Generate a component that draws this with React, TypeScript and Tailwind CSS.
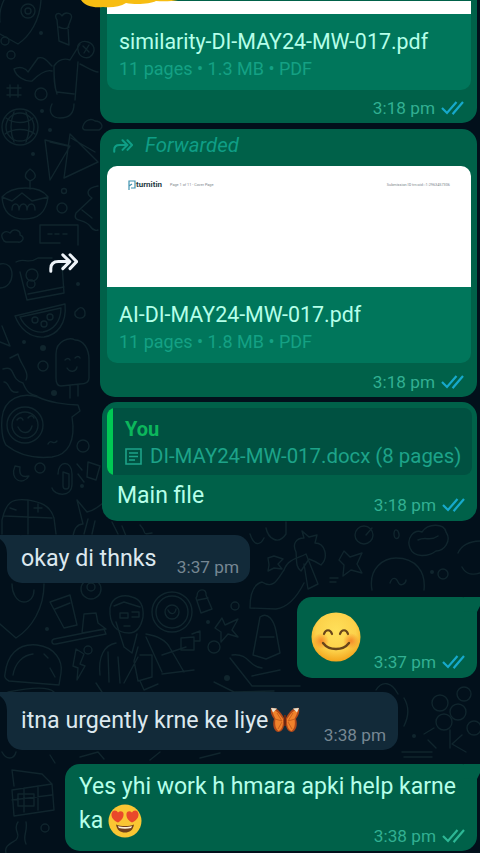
import { ReactNode } from 'react';

type Side = 'in' | 'out';

const Doodles = () => (
    <svg className="absolute inset-0 -z-10" width="480" height="853" viewBox="0 0 480 853" fill="none" stroke="#10252d" strokeWidth="1.4" strokeLinecap="round" strokeLinejoin="round">
        {/* rocket, dancer, ball */}
        <path d="M0 34l18 10c12-8 22-24 23-44M4 0c-3 6-5 14-4 22" />
        <circle cx="28" cy="11" r="7" /><circle cx="28" cy="11" r="3" />
        <circle cx="5" cy="41" r="4" /><circle cx="11" cy="55" r="4" />
        <path d="M57 20c-4-6 2-9 5-4 3-5 12-3 9 3l-3 8 1 18-10-4zM59 27c4 2 8 2 10 0" />
        <path d="M14 69c6-3 12-1 14 3l10-14c6-2 10 4 14 8M14 69c2 8 12 13 18 12 6-6 14-12 20-10M54 66c4-6 10-8 16-6l10-16M54 66c0 12 0 20 3 28M78 62l-3 38M57 92l17 2M52 104c-4 8 0 14 8 14 8 0 14-4 14-14M80 64c8 4 14 8 18 8" />
        <path d="M78 50c-2-6 4-10 10-8s8 8 4 13-13 3-14-5zM83 46l6 6M89 45l-5 8" />
        <path d="M10 85v12M18 85v12M7 88h14M7 95h14" /><circle cx="41" cy="94" r="6" />
        <path d="M83 126c2-6 8-8 12-5 6 0 10 6 4 9H86c-3 0-4-2-3-4z" />
        <circle cx="20" cy="127" r="18" /><circle cx="20" cy="127" r="14" />
        <path d="M6 118c8 6 20 6 27 0M5 134c8-6 22-6 30 0M14 112c-4 10-4 20 0 30M26 112c4 10 4 20 0 30" />
        {/* bunting, dumplings */}
        <path d="M45 140l5 40 20-34zM70 134l-6 44 34-16zM50 142l18 4M71 138l24 14" />
        <path d="M30 181c-8-4-4-9 0-12 6 4 8 9 0 12zM30 181v8M2 197c10-12 38-12 46 0-2 16-10 22-24 22S3 212 2 197zM2 197l10 4 10-8 10 8 16-4M12 210c0-8 7-8 7 0 1-8 8-8 8 0 1-8 8-8 8 0" />
        <circle cx="62" cy="208" r="5" /><circle cx="64" cy="191" r="2.5" />
        <path d="M98 186c-12 2-12 8-6 12l-16 15c-4 10 8 5 14 13 4 6 8 4 8 4M82 210l10 8" />
        <path d="M4 241c-6-8 2-11 6-8 4-6 11-2 10 2 6 2 2 8-2 7H6z" />
        <path d="M40 225h38v20M40 225v18h20M48 234h4M55 234h4M63 234h4" />
        {/* camera bag, melon, ice lolly */}
        <path d="M16 262c8-5 12 3 22-4h14M20 272l7 28 37-7-2-28M28 294l36-7" />
        <circle cx="32" cy="275" r="6" /><circle cx="31" cy="284" r="4" /><path d="M0 264c16-4 16 24 0 24" />
        <path d="M15 316l50-12c2 20-8 31-21 33-14 1-24-8-29-21zM20 317l41-9c0 14-8 22-18 24-10 1-19-6-23-15z" />
        <circle cx="35" cy="320" r="3" /><circle cx="44" cy="324" r="3" /><circle cx="50" cy="317" r="3" />
        <path d="M77 310c4-5 8-1 8 3 1 7-12 7-10-1z" />
        <path d="M56 354c0-14 14-17 19-14 8 0 14 8 14 20v18c0 4-4 6-9 6l-19 2c-4 0-5-3-5-8zM70 386v12M78 385v11M65 360c2-2 4-2 5 0M75 358c2-2 4-2 5 0M67 368c3 5 9 4 10-1" />
        <path d="M2 326l8 20-10-4M3 369c14-4 6 10 20 14 4 10 8 12 14 13M10 358l8-4c2 10 12 18 8 26M4 382c6 0 4 12 14 10" />
        <circle cx="43" cy="366" r="5" />
        {/* whistle */}
        <path d="M2 418c2-20 20-26 36-21 10 5 28 8 40 8l2 6-8 6c4 24-4 38-20 40-20 2-36-4-46-12-4-6-5-18-4-27zM48 444c3-6 5 2 9-3" />
        <circle cx="25" cy="425" r="18" /><circle cx="25" cy="425" r="13" /><path d="M17 420c2-3 5-3 6 0M28 418c2-3 5-3 6 0M18 427c4 8 12 7 14-1" />
        <circle cx="83" cy="446" r="6" /><circle cx="40" cy="468" r="5" />
        <path d="M15 466c-6 14 8 20 14 10-8 2-10-2-9-9zM58 474c0-14 14-14 14 0v10c0 14-18 12-20 4M63 472v14c0 4 6 4 6 0v-12zM77 464l5 6M78 474l6 8M88 462l12 4-4 14-9-3z" />
        {/* calculator and burger by the first incoming message */}
        <path d="M2 520c4-18 10-22 26-20 10 2 22 4 26 18l2 16M2 520v14M28 500v34M4 516l48 2M34 508h8M38 504v8M10 508l6 2M73 536c2-12 8-12 10-12l-6-24 10 12c10-2 14-8 20-12M84 534l4-15M92 534l3-13" />
        <path d="M112 522l6 12M122 526l4 10M140 525c8 8 0 10 12 8" />
        {/* lower band */}
        <path d="M0 624l16 14c16-10 28-30 28-54M12 584c0 8 4 18 12 18 6 0 10-5 10-12M50 602l20-7 7 30-13 3zM55 609l15-6" />
        <circle cx="91" cy="589" r="10" /><circle cx="91" cy="587" r="4" />
        <path d="M84 614l12-1 2 10 8 6-24 4zM54 639l50-10 2 5-50 10c-5 1-5-4-2-5z" />
        <path d="M110 608c2-12 14-14 22-11 8 2 12 8 11 20-2 10-6 16-14 16-12 0-20-8-19-25zM114 606l10-4 16 5M120 613h8v5h-8zM132 612h7v5h-7M124 626h6" />
        <path d="M116 622l8 25 8 6 5-19M100 675c-2-18 4-30 16-32M109 682l-1-30M120 683l-2-26M146 634c12 2 20 6 24 14l14 24M140 655h12v22l-14 4-4-20 4-14M124 683l14-26M146 637l16 35M162 655l24-8M162 674l32-4" />
        <circle cx="172" cy="612" r="20" /><circle cx="172" cy="612" r="16" /><circle cx="172" cy="612" r="7" /><path d="M168 610c2 5 7 5 8-1" />
        <path d="M197 596c0-8 10-8 9-1l6 14-11 4-5-15zM198 600l10-2M222 618l3 7 13-6-6 11 6 7-10-3-7 8v-10l-6-4z" />
        <circle cx="235" cy="606" r="4" /><path d="M181 638l13-1v13h-13zM192 634l8-3v10h-6" /><circle cx="214" cy="647" r="6" /><circle cx="88" cy="650" r="4" />
        <path d="M5 674c2-18 12-31 32-29 18 2 26 16 24 28l-2 12-50-4c-4-2-5-4-4-7zM13 675c2-12 10-20 20-21M50 668l5 9M44 654l4 4M76 649l8 5-4 10 5 2-8 14 1-12-5-2z" />
        <path d="M250 534c4 12 10 12 14 4M266 528c2 10 12 18 20 6V522M296 552c-4-8 0-14 8-14l-2-7 7 6 8-2-2 8c10 0 14 14 6 22-6-4-12-6-12-6l-8 12c-6-4-4-12-5-19z" />
        <circle cx="364" cy="535" r="9" /><path d="M366 535l6-7M394 534c0-6 4-5 5 0s-5 7-5 0" />
        <path d="M268 558l6-2 9 3-5 5 4 5-8-1-6 3 1-6zM344 551l6 6 12-4-5 11 5 9-11-3-8 6 1-11-5-5zM410 548c-4-10 4-19 12-16 6-9 22-9 24 0 6 9-2 19-10 19-8 6-22 7-26-3zM418 540c8-4 12 2 20-4M458 553c4-9 14-12 24-12M462 567c4 8 12 8 18 6" />
        <path d="M250 608c0-16 4-24 12-26 12 8 16-4 22-12 4-12 16-12 22-16l12 30-10 5-4-25M250 608l26 1c14-2 22-14 28-26M372 590c-4-22 12-32 24-32 20 0 30 14 28 32M390 583c2-6 6-6 8-1s8 2 8-2" />
        <circle cx="443" cy="574" r="5" /><path d="M330 578h8M330 582h6" />
        <path d="M253 655l7-38c8-6 14 4 16 14l4 22-14 6zM260 637h14M232 655c18-2 16 12 30 13M230 658l22 28h48M252 676l28-6" />
        {/* sides of the last messages */}
        <path d="M8 692c20-4 40-6 46 0M96 683l6 9M140 681l4 9 14-6M214 682l20 10 40-1M376 690c6-10 16-8 22 4M404 698c6 10 4 20 0 28" />
        <circle cx="440" cy="703" r="8" /><circle cx="458" cy="712" r="8" /><circle cx="444" cy="722" r="8" /><circle cx="464" cy="694" r="7" /><circle cx="474" cy="728" r="7" />
        <path d="M450 730v18M434 728l-10 6M462 735l-10 9 14 8M402 752h30M404 757h28M428 740l8 8" />
        <path d="M12 790l40-6 2 26-40 6zM14 786l-2-16 30 4 10 10M12 800l40-5M24 788v24M38 786v24M18 794h16v12H18z" />
        <circle cx="45" cy="828" r="4" /><path d="M18 822c-6 8 4 12-2 18-6 4-12 6-10 13M26 822c2 10-4 14 0 22M2 752c4 8 12 8 14 0M50 755l5 8M80 757l18-5 6 7M150 760l10-8M200 758l20-5" />
        <g fill="#10252d" stroke="none">
            <circle cx="41" cy="33" r="2" /><circle cx="42" cy="111" r="2" /><circle cx="33" cy="154" r="2" /><circle cx="50" cy="130" r="2" />
            <circle cx="78" cy="284" r="2" /><circle cx="43" cy="348" r="3" /><circle cx="54" cy="393" r="3" /><circle cx="24" cy="342" r="2" />
            <circle cx="82" cy="486" r="2" /><circle cx="208" cy="622" r="2" /><circle cx="47" cy="629" r="2" /><circle cx="432" cy="572" r="2" />
            <circle cx="227" cy="678" r="3" /><circle cx="414" cy="736" r="2" />
        </g>
    </svg>
);

const ForwardIcon = ({ className }: { className: string }) => (
    <svg className={className} viewBox="0 0 29 20" fill="none" stroke="currentColor" strokeWidth="3" strokeLinecap="round" strokeLinejoin="round">
        <path d="M1.800 18.200v-2.600C1.800 10.800 4.600 8.500 9.500 8.500H19M13.800 1.800l7 6.800-7 7M21 1.800l6.600 6.800-6.600 7" />
    </svg>
);

const Ticks = ({ read = true }: { read?: boolean }) => (
    <svg className={read ? 'ml-1.5 h-4 w-[23px] text-[#16a9cb]' : 'ml-1.5 h-4 w-[23px] text-[#2db795]'} viewBox="0 0 23 16" fill="none" stroke="currentColor" strokeWidth="2.2">
        <path d="M1 8l5 5L15.500 2M11.500 12.500l.8.800L22 2" />
    </svg>
);

const Time = ({ children, side = 'out', read }: { children: string; side?: Side; read?: boolean }) => (
    <div className={'flex h-5 items-center text-[17.2px] leading-5 whitespace-nowrap ' + (side === 'out' ? 'text-[#32b092]' : 'text-[#768793]')}>
        <span>{children}</span>
        {side === 'out' && <Ticks read={read} />}
    </div>
);

const Bubble = ({ side, tail, className, children }: { side: Side; tail?: boolean; className: string; children: ReactNode }) => (
    <div className={'relative shrink-0 rounded-[15px] ' + (side === 'out' ? 'self-end bg-[#006149] text-[#b5ffe9] ' : 'self-start bg-[#122a39] text-[#dce8ef] ') + className}>
        {tail && side === 'out' &&
            <svg className="absolute top-0 -right-[3px] h-4 w-4 text-[#006149]" viewBox="0 0 16 16" fill="currentColor"><path d="M0 0h16v9l-3 6L0 14z" /></svg>
        }
        {tail && side === 'in' &&
            <svg className="absolute top-0 -left-[7px] h-5 w-5 text-[#122a39]" viewBox="0 0 20 20" fill="currentColor"><path d="M0 0h20v20H7C7 12 5 8 0 4z" /></svg>
        }
        {children}
    </div>
);

const FileInfo = ({ name, size }: { name: string; size: string }) => (
    <div className="h-[76px] rounded-b-[10px] bg-[#00765b] px-3 pt-[14px]">
        <div className="text-[21.400px] leading-[28px] whitespace-nowrap">{name}</div>
        <div className="text-[18px] leading-[25px] whitespace-nowrap text-[#14a184]">11 pages • {size} • PDF</div>
    </div>
);

const Smile = () => (
    <svg className="h-[50px] w-[50px]" viewBox="0 0 50 50">
        <defs>
            <radialGradient id="smile" cx=".5" cy=".38" r=".62">
                <stop offset="0" stopColor="#ffe05a" /><stop offset=".65" stopColor="#fcd14a" /><stop offset="1" stopColor="#f3a51c" />
            </radialGradient>
            <radialGradient id="blush"><stop offset="0" stopColor="#f47c20" stopOpacity=".85" /><stop offset="1" stopColor="#f47c20" stopOpacity="0" /></radialGradient>
        </defs>
        <circle cx="25" cy="25" r="24.500" fill="url(#smile)" />
        <circle cx="10" cy="29" r="8" fill="url(#blush)" /><circle cx="40" cy="29" r="8" fill="url(#blush)" />
        <path d="M13 22c1.500-5 6.500-5 8 0M29 22c1.500-5 6.500-5 8 0" fill="none" stroke="#68451a" strokeWidth="2.2" strokeLinecap="round" />
        <path d="M12 31c6 8 20 8 26 0" fill="none" stroke="#68451a" strokeWidth="2.4" strokeLinecap="round" />
    </svg>
);

const HeartEyes = () => (
    <svg className="ml-[5px] h-[34px] w-[34px]" viewBox="0 0 34 34">
        <circle cx="17" cy="17" r="16.500" fill="#fac633" />
        <path d="M10 18.500C4 16 2 11 4.500 7.500c2-2 4.500-1 5.500 1 2-2 5-1.500 5.500 1 .5 4-2 7-5.500 9zM24 18.500c-4-2-6-5-5.500-9 .5-2.500 3.500-3 5.500-1 1-2 3.500-3 5.500-1C32 11 30 16 24 18.500z" fill="#e9492b" />
        <path d="M8 20.500c5 2 13 2 18 0-1 6-4.500 8-9 8s-8-2-9-8z" fill="#71401b" />
        <path d="M10 22c4 1.300 10 1.300 14 0l-.8 2c-4 1-8.500 1-12.400 0z" fill="#fff0d6" />
    </svg>
);

const Butterfly = () => (
    <svg className="ml-[2px] h-7 w-[30px]" viewBox="0 0 30 28">
        <path d="M14 12C10 4 5 1 1 2c-1 5 1 8 3 11-2 6 0 12 4 13 4 0 6-4 6-8h2c0 4 2 8 6 8 4-1 6-7 4-13 2-3 4-6 3-11-4-1-9 2-13 10z" fill="#b0481a" />
        <path d="M13 13C9 7 6 4 2.500 4c0 4 2 6 3 9-1 5 0 10 3 12 3-1 4.500-5 4.500-9zM17 13c4-6 7-9 10.500-9 0 4-2 6-3 9 1 5 0 10-3 12-3-1-4.500-5-4.500-9z" fill="#f0822b" />
        <path d="M5 13l7 2M8 23l4-7M7 7l5 8M25 13l-7 2M22 23l-4-7M23 7l-5 8" stroke="#c9601c" fill="none" />
        <path d="M1 2l6 .5-4 4zM29 2l-6 .5 4 4z" fill="#e7e6d5" />
        <path d="M15 9v11" stroke="#6b2812" strokeWidth="2" />
    </svg>
);

export default function App() {
    return (
        <div className="relative isolate flex h-[853px] w-[480px] flex-col overflow-hidden bg-[#02101b] pr-[3px] font-[Roboto,'Liberation_Sans',sans-serif]">
            <Doodles />

            <Bubble side="out" className="h-[123px] w-[377px] rounded-t-none pr-[6px] pl-[7px]">
                <div className="mt-px h-[13px] bg-white" />
                <FileInfo name="similarity-DI-MAY24-MW-017.pdf" size="1.3 MB" />
                <div className="mt-2 flex justify-end pr-[7px]"><Time>3:18 pm</Time></div>
            </Bubble>
            {/* reaction of the message above */}
            <svg className="absolute top-0 left-20" width="98" height="8" viewBox="0 0 98 8" fill="#f7bd12">
                <path d="M1 0h97c-6 1.500-16 1.500-22 1-6 3-20 4-30 2-6 4-15 5-23 4C13 8 5 6 1 0z" />
            </svg>

            <Bubble side="out" className="mt-[6px] h-[268px] w-[377px] pr-[6px] pl-[7px]">
                <div className="flex h-[37px] items-center pl-[6px] text-[#0f9e86]">
                    <ForwardIcon className="mb-[3px] h-[14px] w-5" />
                    <span className="ml-3 mb-1 text-[20.400px] italic">Forwarded</span>
                </div>
                <div className="flex h-[121px] items-start justify-between rounded-t-[10px] bg-white px-[21px] pt-[13px] text-[#7b858b]">
                    <div className="flex items-center">
                        <svg width="8" height="11" viewBox="0 0 8 11" fill="none" stroke="#3f93b0" strokeWidth="1.2"><path d="M1 10V1h6v7H3M1 6l3-2" /></svg>
                        <b className="text-[8px] leading-3 text-[#263c44]">turnitin</b>
                        <span className="ml-2 text-[3.800px] leading-3">Page 1 of 11 - Cover Page</span>
                    </div>
                    <span className="text-[3.800px] leading-3">Submission ID trn:oid:::1:2963457306</span>
                </div>
                <FileInfo name="AI-DI-MAY24-MW-017.pdf" size="1.8 MB" />
                <div className="mt-[9px] flex justify-end pr-[7px]"><Time>3:18 pm</Time></div>
                <ForwardIcon className="absolute top-[124px] -left-[51px] h-5 w-[29px] text-[#eef3f8]" />
            </Bubble>

            <Bubble side="out" className="mt-[5px] h-[119px] w-[375px] px-[5px] pt-[6px]">
                <div className="flex h-[67px] overflow-hidden rounded-[8px] bg-[#005141]">
                    <div className="w-[6px] bg-[#00c853]" />
                    <div className="pt-2 pl-3">
                        <div className="text-[20px] leading-[27px] font-bold text-[#0cb75c]">You</div>
                        <div className="flex items-center text-[20.400px] leading-[27px] whitespace-nowrap text-[#1da389]">
                            <svg width="17" height="17" viewBox="0 0 17 17" fill="none" stroke="currentColor" strokeWidth="1.6" className="mr-2 shrink-0"><path d="M1 1h15v15H1zM4 5h9M4 8.500h9M4 12h6" /></svg>
                            DI-MAY24-MW-017.docx (8 pages)
                        </div>
                    </div>
                </div>
                <div className="flex justify-between pt-[7px] pr-[7px] pl-[10px]">
                    <span className="text-[23px] leading-7">Main file</span>
                    <div className="pt-[13px]"><Time>3:18 pm</Time></div>
                </div>
            </Bubble>

            <Bubble side="in" tail className="mt-[14px] ml-[7px] flex h-[48px] w-[243px] items-start justify-between pt-[9px] pr-[11px] pl-[14px]">
                <span className="text-[23.200px] leading-7 whitespace-nowrap">okay di thnks</span>
                <div className="pt-[13px]"><Time side="in">3:37 pm</Time></div>
            </Bubble>

            <Bubble side="out" tail className="mt-[14px] flex h-[81px] w-[180px] items-start justify-between pt-[15px] pr-3 pl-[14px]">
                <Smile />
                <div className="pt-10"><Time>3:37 pm</Time></div>
            </Bubble>

            <Bubble side="in" tail className="mt-[14px] ml-[7px] flex h-[58px] w-[391px] items-start justify-between pt-[14px] pr-3 pl-[14px]">
                <div className="flex items-center text-[23.200px] leading-7 whitespace-nowrap">itna urgently krne ke liye<Butterfly /></div>
                <div className="pt-[19px]"><Time side="in">3:38 pm</Time></div>
            </Bubble>

            <Bubble side="out" tail className="mt-[14px] h-[87px] w-[412px] pt-2 pr-3 pl-[14px]">
                <div className="text-[23px] leading-[30px] whitespace-nowrap">Yes yhi work h hmara apki help karne</div>
                <div className="flex items-start justify-between">
                    <div className="flex h-[38px] items-center text-[23px]">ka<HeartEyes /></div>
                    <div className="pt-6"><Time read={false}>3:38 pm</Time></div>
                </div>
            </Bubble>
        </div>
    );
}
